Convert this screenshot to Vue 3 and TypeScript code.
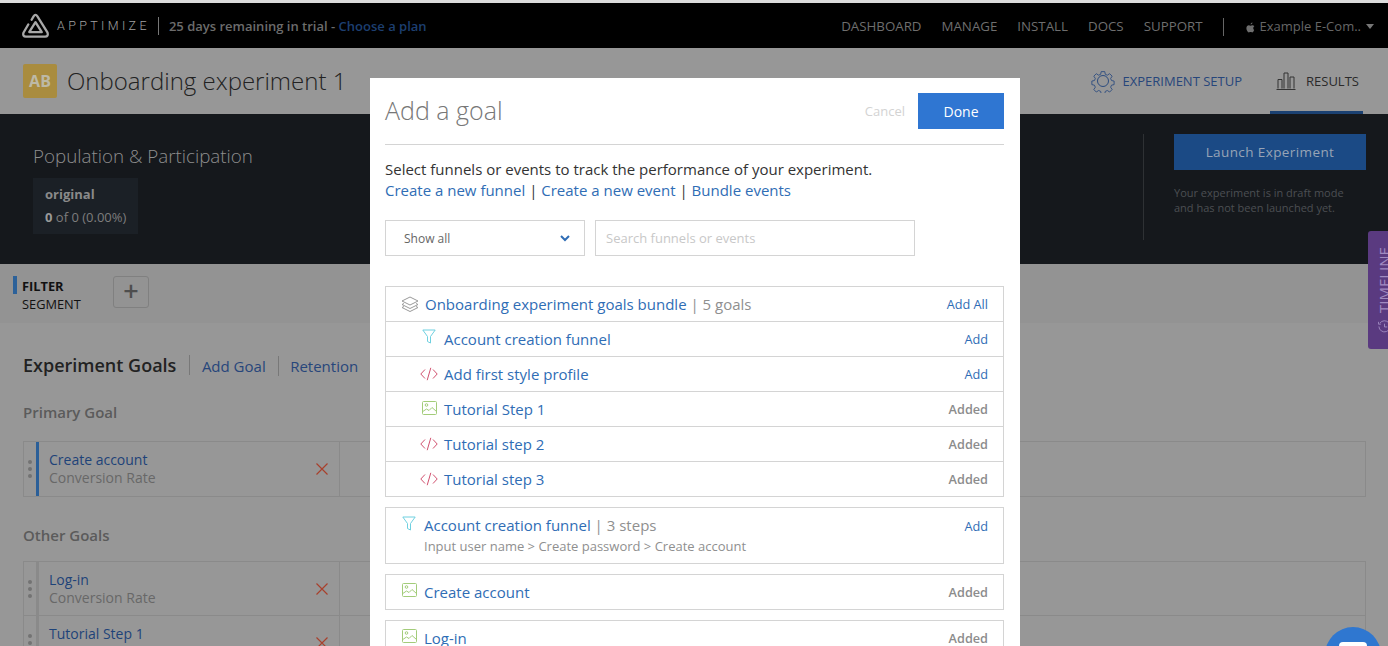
<script setup lang="ts">
type IconKind = 'funnel' | 'code' | 'image'
interface BundleRow { icon: IconKind; label: string; action: string }

const nav: string[] = ['DASHBOARD', 'MANAGE', 'INSTALL', 'DOCS', 'SUPPORT']
const bundleRows: BundleRow[] = [
  { icon: 'funnel', label: 'Account creation funnel', action: 'Add' },
  { icon: 'code', label: 'Add first style profile', action: 'Add' },
  { icon: 'image', label: 'Tutorial Step 1', action: 'Added' },
  { icon: 'code', label: 'Tutorial step 2', action: 'Added' },
  { icon: 'code', label: 'Tutorial step 3', action: 'Added' },
]
const otherGoals: string[] = ['Log-in', 'Tutorial Step 1']
</script>

<template>
  <div class="page">
    <header class="topbar">
      <svg class="logo" viewBox="0 0 28 28" fill="none" stroke="#a8a8a8" stroke-width="2.400" stroke-linejoin="round" stroke-linecap="round">
        <path d="M10 8 L12 4.500 Q14 1.500 16 4.500 L26.500 21.500 Q27.500 25.500 24 25.500 L4 25.500 Q.5 25.500 1.500 21.500 L6.500 13" />
        <path d="M14 10.500 L20.500 20.800 L7.500 20.800 Z" />
      </svg>
      <span class="brand">APPTIMIZE</span>
      <span class="trial">25 days remaining in trial - <a class="plan">Choose a plan</a></span>
      <nav class="nav">
        <a v-for="item in nav" :key="item">{{ item }}</a>
      </nav>
      <span class="nav-sep"></span>
      <svg class="apple" viewBox="0 0 12 14" fill="#6e6e6e">
        <path d="M8.600 0.300C8.700 1.500 7.600 3 6.100 3 6 1.800 7.200 0.400 8.600 0.300Z" />
        <path d="M10.900 10.200C10.300 11.700 9.300 13.500 8.100 13.500 7.200 13.500 7 13 5.900 13 4.800 13 4.500 13.500 3.700 13.500 2.400 13.500 0.500 10.800 0.500 8.100 0.500 5.500 2.200 4.100 3.700 4.100 4.700 4.100 5.400 4.700 6 4.700 6.600 4.700 7.400 4 8.600 4 9.500 4 10.500 4.500 11.100 5.300 9.100 6.500 9.400 9.300 10.900 10.200Z" />
      </svg>
      <span class="app-name">Example E-Com..</span>
      <span class="caret"></span>
    </header>

    <section class="titlebar">
      <span class="ab">AB</span>
      <h1 class="title">Onboarding experiment 1</h1>
      <div class="tabs">
        <a class="tab setup">
          <svg class="gear" viewBox="0 0 24 24" fill="none" stroke="#2c4c7f" stroke-width="1">
            <circle cx="12" cy="12" r="5.500" />
            <path d="M10 1.500h4l.6 3 2.300 1 2.600-1.700 2.800 2.800-1.700 2.600 1 2.300 2.900.6v4l-2.900.6-1 2.300 1.700 2.600-2.800 2.800-2.600-1.700-2.300 1-.6 2.900h-4l-.6-2.900-2.300-1-2.600 1.700-2.800-2.800 1.700-2.600-1-2.300-2.900-.6v-4l2.900-.6 1-2.300-1.700-2.600 2.800-2.800 2.600 1.700 2.300-1z" transform="translate(1.300 1.300) scale(.89)" />
          </svg>
          EXPERIMENT SETUP
        </a>
        <a class="tab results">
          <svg class="bars" viewBox="0 0 20 18" fill="none" stroke="#333" stroke-width="1">
            <path d="M.5 17.500h19M2 16.500v-9h4v9M8 16.500V1h4v15.500M14 16.500V5h4v11.500" />
          </svg>
          RESULTS
        </a>
      </div>
    </section>

    <section class="band">
      <div class="pop">
        <h2 class="pop-title">Population &amp; Participation</h2>
        <div class="pop-box">
          <strong class="pop-name">original</strong>
          <span class="pop-val"><b>0</b> of 0 (0.00%)</span>
        </div>
      </div>
      <div class="launch">
        <button class="launch-btn" type="button">Launch Experiment</button>
        <p class="launch-note">Your experiment is in draft mode<br />and has not been launched yet.</p>
      </div>
    </section>

    <section class="filterbar">
      <div class="filter-label">
        <b>FILTER</b>
        <span>SEGMENT</span>
      </div>
      <span class="plus">+</span>
    </section>

    <main class="content">
      <div class="goals-head">
        <h2>Experiment Goals</h2>
        <a>Add Goal</a>
        <a>Retention</a>
      </div>
      <h3 class="sub">Primary Goal</h3>
      <div class="goal-list">
        <div class="goal">
          <span class="dots"><i></i><i></i><i></i></span>
          <span class="accent primary"></span>
          <div class="goal-text"><a>Create account</a><span>Conversion Rate</span></div>
          <svg class="x" viewBox="0 0 12 12" stroke="#a8402c" stroke-width="1.200"><path d="M.5.500l11 11M11.500.500l-11 11" /></svg>
        </div>
      </div>
      <h3 class="sub other">Other Goals</h3>
      <div class="goal-list second">
        <div v-for="g in otherGoals" :key="g" class="goal">
          <span class="dots"><i></i><i></i><i></i></span>
          <span class="accent"></span>
          <div class="goal-text"><a>{{ g }}</a><span>Conversion Rate</span></div>
          <svg class="x" viewBox="0 0 12 12" stroke="#a8402c" stroke-width="1.200"><path d="M.5.500l11 11M11.500.500l-11 11" /></svg>
        </div>
      </div>
    </main>

    <aside class="timeline">
      <div class="timeline-inner">
        <svg class="clock" viewBox="0 0 14 14" fill="none" stroke="#a08ac0" stroke-width="1">
          <path d="M2 3.500A6 6 0 1 1 1 7M7 4v3.500h3M.5 2v2.500H3" />
        </svg>
        <span>TIMELINE</span>
      </div>
    </aside>

    <div class="chat"><span></span></div>

    <div class="modal">
      <div class="modal-head">
        <h2>Add a goal</h2>
        <a class="cancel">Cancel</a>
        <button class="done" type="button">Done</button>
      </div>
      <p class="intro">Select funnels or events to track the performance of your experiment.</p>
      <p class="links"><a>Create a new funnel</a> | <a>Create a new event</a> | <a>Bundle events</a></p>
      <div class="controls">
        <div class="select">
          Show all
          <svg viewBox="0 0 10 7" fill="none" stroke="#2f6db5" stroke-width="2"><path d="M1 1l4 4 4-4" /></svg>
        </div>
        <div class="search">Search funnels or events</div>
      </div>

      <div class="group">
        <div class="row head">
          <svg class="ic layers" viewBox="0 0 18 16" fill="none" stroke="#999" stroke-width="1" stroke-linejoin="round">
            <path d="M9 1l8 4-8 4-8-4zM3 7.500L1 8.500l8 4 8-4-2-1M3 10.500l-2 1 8 4 8-4-2-1" />
          </svg>
          <a class="name">Onboarding experiment goals bundle</a>
          <span class="meta">&nbsp;| 5 goals</span>
          <a class="act">Add All</a>
        </div>
        <div v-for="r in bundleRows" :key="r.label" class="row child">
          <span class="ic-wrap">
            <svg v-if="r.icon === 'funnel'" class="ic funnel lift3" viewBox="0 0 14 15" fill="none" stroke="#6fd0e0" stroke-width="1" stroke-linejoin="round"><path d="M.8 1h12.400L8.500 7.500V14l-3-1.500v-5z" /></svg>
            <svg v-else-if="r.icon === 'code'" class="ic code" viewBox="0 0 18 14" fill="none" stroke="#d0506e" stroke-width="1"><path d="M5 2.500L.8 7 5 11.500M13 2.500L17.200 7 13 11.500M10.800 .8L7.200 13.200" /></svg>
            <svg v-else class="ic image lift2" viewBox="0 0 15 14" fill="none" stroke="#a3cc7a" stroke-width="1"><rect x=".5" y=".5" width="14" height="13" rx="1" /><circle cx="4.500" cy="4" r="1.300" /><path d="M.8 10.500L4.500 8l2.500 1.500L10 6.500l4.500 4" /></svg>
          </span>
          <a class="name">{{ r.label }}</a>
          <a class="act" :class="{ added: r.action === 'Added' }">{{ r.action }}</a>
        </div>
      </div>

      <div class="card funnel-card">
        <svg class="ic funnel" viewBox="0 0 14 15" fill="none" stroke="#6fd0e0" stroke-width="1" stroke-linejoin="round"><path d="M.8 1h12.400L8.500 7.500V14l-3-1.500v-5z" /></svg>
        <div class="funnel-text">
          <div><a class="name">Account creation funnel</a><span class="meta">&nbsp;| 3 steps</span></div>
          <div class="steps">Input user name &gt; Create password &gt; Create account</div>
        </div>
        <a class="act">Add</a>
      </div>

      <div class="card plain">
        <svg class="ic image" viewBox="0 0 15 14" fill="none" stroke="#a3cc7a" stroke-width="1"><rect x=".5" y=".5" width="14" height="13" rx="1" /><circle cx="4.500" cy="4" r="1.300" /><path d="M.8 10.500L4.500 8l2.500 1.500L10 6.500l4.500 4" /></svg>
        <a class="name">Create account</a>
        <a class="act added">Added</a>
      </div>

      <div class="card plain">
        <svg class="ic image" viewBox="0 0 15 14" fill="none" stroke="#a3cc7a" stroke-width="1"><rect x=".5" y=".5" width="14" height="13" rx="1" /><circle cx="4.500" cy="4" r="1.300" /><path d="M.8 10.500L4.500 8l2.500 1.500L10 6.500l4.500 4" /></svg>
        <a class="name">Log-in</a>
        <a class="act added">Added</a>
      </div>
    </div>
  </div>
</template>

<style>
html, body { margin: 0; background: #979797; }
</style>

<style scoped>
.page {
  position: relative;
  width: 1388px;
  height: 646px;
  overflow: hidden;
  background: #979797;
  font-family: "Open Sans", "Liberation Sans", sans-serif;
  color: #222;
}
h1, h2, h3, p { margin: 0; font-weight: 400; }

.topbar {
  box-sizing: border-box;
  height: 48px;
  background: #000;
  border-top: 3px solid #dcdcdc;
  display: flex;
  align-items: center;
  padding: 0 0 0 22px;
}
.logo { width: 27px; height: 27px; flex: none; }
.brand { margin-left: 8px; font-size: 12.500px; letter-spacing: 3.350px; color: #a0a0a0; font-family: "Roboto", sans-serif; font-weight: 300; }
.trial {
  margin-left: 8px;
  padding-left: 10px;
  border-left: 1px solid #777;
  font-size: 13px;
  line-height: 18px;
  color: #6c6c6c;
  font-weight: 600;
}
.plan { color: #1d3f70; }
.nav { margin-left: auto; display: flex; gap: 20px; font-size: 13.300px; color: #6e6e6e; padding-top: 1px; }
.nav-sep { width: 1px; height: 18px; background: #666; margin: 2px 22px 0 20px; }
.apple { width: 9px; height: 11px; margin-top: 3px; }
.app-name { margin-left: 5px; font-size: 13px; color: #666; padding-top: 1px; }
.caret { width: 0; height: 0; margin: 2px 14px 0 5px; border-left: 4px solid transparent; border-right: 4px solid transparent; border-top: 5px solid #777; }

.titlebar {
  box-sizing: border-box;
  height: 66px;
  display: flex;
  align-items: center;
  padding: 0 0 0 23px;
  background: #979797;
}
.ab {
  width: 34px;
  height: 34px;
  border-radius: 2px;
  background: #a98c3f;
  color: #bdb9a6;
  font-size: 16px;
  font-weight: 700;
  display: flex;
  align-items: center;
  justify-content: center;
}
.title { margin-left: 10px; font-size: 24px; font-weight: 300; color: #222; margin-top: -2px; }
.tabs { margin-left: auto; display: flex; height: 100%; }
.tab { display: flex; align-items: center; font-size: 13px; }
.setup { color: #27467b; margin-right: 28px; }
.gear { width: 24px; height: 24px; margin-right: 8px; }
.results {
  box-sizing: border-box;
  width: 93px;
  margin-right: 25px;
  padding: 3px 0 0 6px;
  color: #2a2a2a;
  border-bottom: 3px solid #1b4172;
}
.bars { width: 20px; height: 18px; margin-right: 10px; }

.band {
  height: 150px;
  background: #15181c;
  display: flex;
  justify-content: space-between;
  box-sizing: border-box;
  padding: 20px 22px 0 33px;
}
.pop-title { font-size: 18.800px; font-weight: 300; color: #8e8e8e; margin-top: 9px; line-height: 26px; }
.pop-box {
  margin-top: 9px;
  box-sizing: border-box;
  width: 105px;
  height: 56px;
  padding: 7px 12px;
  background: #1b2026;
  display: flex;
  flex-direction: column;
  gap: 4px;
}
.pop-name { font-size: 13px; line-height: 18px; color: #8a8a8a; }
.pop-val { font-size: 13px; line-height: 18px; color: #7d7d7d; white-space: nowrap; margin-top: 1px; }
.pop-val b { color: #999; }
.launch { position: relative; width: 192px; padding-bottom: 0; }
.launch::before {
  content: "";
  position: absolute;
  left: -31px;
  top: 0;
  width: 1px;
  height: 106px;
  background: #2e3134;
}
.launch-btn {
  display: block;
  width: 192px;
  height: 36px;
  border: 0;
  background: #1b4a85;
  color: #97a4b6;
  font-family: inherit;
  font-size: 13.500px;
  letter-spacing: .4px;
}
.launch-note { margin-top: 15px; font-size: 11px; line-height: 15px; color: #4c4f53; white-space: nowrap; }

.filterbar {
  box-sizing: border-box;
  height: 59px;
  background: #939393;
  display: flex;
  padding: 12px 0 0 13px;
}
.filter-label {
  display: flex;
  flex-direction: column;
  font-size: 12.800px;
  line-height: 18px;
  width: 100px;
  box-sizing: border-box;
  color: #111;
  position: relative;
  padding: 1px 0 0 9px;
}
.filter-label::before { content: ""; position: absolute; left: 0; top: 0; width: 4px; height: 18px; background: #2c6199; }
.plus {
  box-sizing: border-box;
  width: 36px;
  height: 32px;
  border: 1px solid #808080;
  border-radius: 3px;
  text-align: center;
  font-size: 27px;
  font-weight: 600;
  line-height: 27px;
  color: #4e4e4e;
}

.content { padding: 28px 22px 0 23px; }
.goals-head { display: flex; align-items: center; height: 28px; }
.goals-head h2 { font-size: 18px; font-weight: 600; color: #222; padding-right: 13px; border-right: 1px solid #787878; line-height: 20px; }
.goals-head a { font-size: 15px; color: #27467b; padding: 0 12px 0 11.500px; line-height: 20px; margin-top: 1px; }
.goals-head a + a { border-left: 1px solid #787878; }
.sub { margin-top: 23px; font-size: 15px; font-weight: 600; color: #5b5b5b; line-height: 20px; }
.sub.other { margin-top: 28px; }
.goal-list { margin-top: 19px; border: 1px solid #8a8a8a; }
.goal-list.second { margin-top: 16px; }
.goal {
  position: relative;
  height: 54px;
  display: flex;
  align-items: center;
  background: linear-gradient(#8a8a8a, #8a8a8a) 315px 0 / 1px 100% no-repeat;
}
.second .goal { height: 53px; }
.goal + .goal { border-top: 1px solid #8a8a8a; }
.dots { width: 12px; display: flex; flex-direction: column; align-items: center; gap: 3px; }
.dots i { width: 4px; height: 4px; border-radius: 50%; background: #737373; }
.accent { align-self: stretch; width: 3px; background: #8a8a8a; }
.accent.primary { background: #2b5f98; }
.goal-text { margin-left: 10px; display: flex; flex-direction: column; font-size: 14px; line-height: 18px; width: 267px; }
.goal-text a { color: #1e4379; }
.goal-text span { color: #686868; }
.x { width: 12px; height: 12px; }

.timeline {
  position: absolute;
  top: 231px;
  right: 0;
  width: 20px;
  height: 118px;
  background: #5a3a80;
  border-radius: 3px 0 0 3px;
  overflow: hidden;
}
.timeline-inner {
  position: absolute;
  left: 16px;
  top: 102px;
  transform: rotate(-90deg);
  transform-origin: 0 50%;
  display: flex;
  align-items: center;
  gap: 7px;
  white-space: nowrap;
  color: #a08ac0;
  font-size: 15px;
  height: 20px;
  margin-top: -10px;
}
.clock { width: 13px; height: 13px; transform: rotate(90deg); }

.chat {
  position: absolute;
  left: 1325px;
  top: 627px;
  width: 56px;
  height: 56px;
  border-radius: 50%;
  background: #2f77d0;
}
.chat span { position: absolute; left: 14px; top: 15px; width: 28px; height: 22px; background: #fff; border-radius: 4px; }

.modal {
  position: absolute;
  left: 370px;
  top: 78px;
  bottom: 0;
  width: 650px;
  box-sizing: border-box;
  padding: 15px 16px 0 15px;
  background: #fff;
  overflow: hidden;
}
.modal-head {
  display: flex;
  align-items: center;
  padding-bottom: 15px;
  box-sizing: border-box;
  height: 52px;
  border-bottom: 1px solid #d4d4d4;
}
.modal-head h2 { font-size: 25px; font-weight: 300; color: #777; margin: -2px auto 0 0; }
.cancel { font-size: 13px; color: #d3d3d3; margin-right: 13px; }
.done {
  width: 86px;
  height: 36px;
  border: 0;
  background: #2f76d2;
  color: #fff;
  font-family: inherit;
  font-size: 14px;
}
.intro { margin-top: 14px; font-size: 15px; line-height: 21px; color: #333; }
.links { font-size: 15px; line-height: 21px; color: #333; }
.links a, .name { color: #2f6db5; }
.controls { display: flex; gap: 10px; margin-top: 19px; }
.select, .search {
  box-sizing: border-box;
  height: 36px;
  border: 1px solid #d4d4d4;
  display: flex;
  align-items: center;
  font-size: 12px;
}
.select { width: 200px; padding: 0 14px 0 18px; justify-content: space-between; color: #666; }
.select svg { width: 10px; height: 7px; }
.search { width: 320px; padding-left: 10px; color: #c8c8c8; font-size: 13px; }

.group { margin-top: 30px; border: 1px solid #d4d4d4; }
.row {
  box-sizing: border-box;
  height: 35px;
  display: flex;
  align-items: center;
  padding-right: 15px;
  font-size: 15px;
}
.row + .row { border-top: 1px solid #d4d4d4; }
.row.head { height: 34px; padding-left: 15px; }
.row.child { padding-left: 33px; }
.ic-wrap { width: 20px; display: flex; justify-content: center; margin-right: 5px; }
.ic { flex: none; }
.lift3 { margin-top: -5px; }
.lift2 { margin-top: -3px; }
.layers { width: 18px; height: 16px; margin-right: 6px; }
.funnel { width: 14px; height: 15px; }
.code { width: 18px; height: 14px; }
.image { width: 15px; height: 14px; }
.meta { color: #8f8f8f; }
.act { margin-left: auto; font-size: 12.700px; color: #2f6db5; }
.act.added { color: #8c8c8c; font-weight: 600; }

.card { border: 1px solid #d4d4d4; margin-top: 10px; display: flex; padding-right: 15px; box-sizing: border-box; font-size: 15px; }
.funnel-card { height: 57px; padding: 7px 15px 0 16px; align-items: flex-start; }
.funnel-card .funnel { margin: 1px 8px 0 0; }
.funnel-card .act { line-height: 20px; margin-top: 1px; }
.funnel-text { line-height: 20px; }
.steps { font-size: 13px; line-height: 22px; color: #8f8f8f; }
.plain { height: 36px; align-items: center; padding-left: 16px; }
.plain .image { margin-right: 7px; margin-top: -4px; }
</style>
